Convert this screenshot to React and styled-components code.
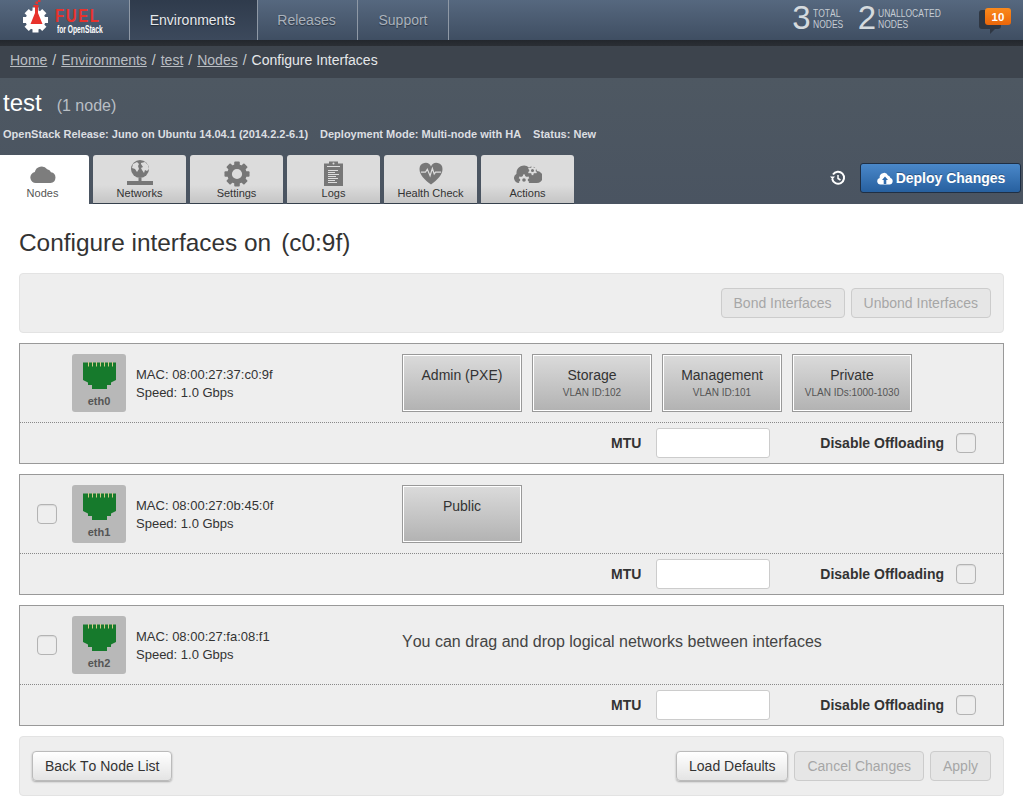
import React from "react";
import styled, { createGlobalStyle, css } from "styled-components";

const Global = createGlobalStyle`
  html, body { margin: 0; padding: 0; background: #fff; }
  body { font-family: "Liberation Sans", Arial, sans-serif; font-size: 14px; color: #333; font-kerning: none; }
  * { box-sizing: border-box; }
`;

const Page = styled.div`width: 1023px; height: 804px; overflow: hidden; background: #fff;`;

const NavBar = styled.header`
  height: 46px; display: flex;
  background: linear-gradient(#56687f 0, #3f4e62 40px, #23272d 40px, #2b2f35 46px);
  color: #fff;
`;
const LogoCell = styled.div`
  width: 130px; height: 40px; border-right: 1px solid #8f99a6;
  display: flex; align-items: center; padding-left: 22px; gap: 3px; flex: none;
`;
const LogoText = styled.div`display: flex; flex-direction: column; line-height: 1; margin-top: 3px;`;
const Fuel = styled.span`
  font-size: 18px; font-weight: 700; color: #e8322c; letter-spacing: 2px; line-height: 15px;
  transform: scaleX(.83); transform-origin: left center; display: block;
`;
const ForOpenStack = styled.span`
  font-size: 10px; font-weight: 700; color: #fff; line-height: 11px; margin-left: 2px; white-space: nowrap;
  transform: scaleX(.67); transform-origin: left center; display: block; width: 45px;
`;
const NavItem = styled.div`
  height: 40px; width: ${p => p.$w}px; flex: none; border-right: 1px solid #8f99a6;
  display: flex; align-items: center; justify-content: center; font-size: 14px;
  padding-right: ${p => p.$pr || 0}px;
  color: ${p => (p.$active ? "#e6e9ec" : "#aab2bc")};
  background: ${p => (p.$active ? "linear-gradient(#2f3b4c, #3c495c)" : "transparent")};
  text-shadow: 0 1px 1px rgba(0,0,0,.4);
`;
const NavRight = styled.div`margin-left: auto; height: 40px; display: flex; align-items: flex-start; padding-top: 1px;`;
const Stat = styled.div`display: flex; align-items: center; margin-right: ${p => p.$mr}px; height: 34px;`;
const StatNum = styled.span`font-size: 33px; font-weight: 400; color: #d5dade; line-height: 34px;`;
const StatLabel = styled.span`
  font-size: 10px; line-height: 11px; color: #c6ccd3; margin-left: 2px; margin-top: 1px; width: ${p => p.$w}px; white-space: nowrap;
  transform: scaleX(.85); transform-origin: left center; display: block;
`;
const Notif = styled.div`position: relative; width: 34px; height: 26px; margin: 7px 12px 0 0;`;
const Bubble = styled.div`
  position: absolute; left: 2px; top: 2px; width: 22px; height: 19px; border-radius: 3px; background: #2f3743;
  &::after { content: ""; position: absolute; left: 11px; bottom: -5px; border: 3px solid transparent; border-top: 3px solid #2f3743; border-left: 3px solid #2f3743; }
`;
const Badge = styled.div`
  position: absolute; left: 8px; top: 0; width: 26px; height: 17px; border-radius: 3px;
  background: linear-gradient(#fb8a1c, #ea660a); color: #fff; font-size: 11.5px; font-weight: 700;
  display: flex; align-items: center; justify-content: center;
`;

const Crumbs = styled.nav`
  height: 32px; background: #3d444d; padding: 5px 10px 0; font-size: 14px; color: #c9cdd1; line-height: 18px;
  display: flex; gap: 5px; white-space: nowrap;
`;
const Crumb = styled.span`text-decoration: underline; color: #b9bdc2;`;
const CrumbCurrent = styled.span`color: #e6e8ea;`;

const Header = styled.section`
  height: 126px; background: linear-gradient(#4e5862, #4a5461); position: relative; display: flex; flex-direction: column;
`;
const ClusterName = styled.div`padding: 11px 0 0 3px; display: flex; align-items: baseline; color: #fff; height: 44px;`;
const ClusterTitle = styled.span`font-size: 24px; line-height: 28px;`;
const ClusterCount = styled.span`font-size: 16px; margin-left: 15px; color: #b9bfc5;`;
const ClusterInfo = styled.div`
  font-size: 11px; font-weight: 700; color: #dcdfe2; padding-left: 3px; margin-top: 5px; line-height: 14px;
  display: flex; gap: 12px;
`;
const TabRow = styled.div`display: flex; gap: 4px; margin: auto 0 0 -4px; align-items: flex-end;`;
const Tab = styled.div`
  width: 93px; height: 49px; border-radius: 3px 3px 0 0; flex: none;
  display: flex; flex-direction: column; align-items: center; justify-content: flex-start; padding-top: 5px;
  font-size: 11px; color: #333;
  ${p => p.$active
    ? css`background: #fff; color: #555;`
    : css`background: linear-gradient(#dcdcdc 0, #dcdcdc 30px, #c4c4c4 49px); border-bottom: 1px solid #35404c; `}
`;
const TabIcon = styled.div`height: 27px; display: flex; align-items: center; justify-content: center;`;
const TabLabel = styled.span`line-height: 13px;`;
const HeaderActions = styled.div`
  position: absolute; right: 2px; top: 85px; display: flex; align-items: center; gap: 14px;
`;
const Deploy = styled.div`
  width: 161px; height: 30px; border-radius: 3px; border: 1px solid #1f2f44;
  background: linear-gradient(#4a88c9, #27609f); color: #fff; font-weight: 700; font-size: 14px;
  display: flex; align-items: center; justify-content: center; gap: 3px; padding-left: 1px; text-shadow: 0 -1px 0 rgba(0,0,0,.3);
`;

const Content = styled.main`padding: 0 19px;`;
const Title = styled.h3`margin: 0; font-weight: 400; font-size: 24.4px; line-height: 28px; color: #333; padding-top: 25px; height: 69px;`;
const TitleNode = styled.span`margin-left: 10px;`;
const Well = styled.div`
  height: 60px; background: #eee; border: 1px solid #e3e3e3; border-radius: 4px;
  display: flex; align-items: center; padding: 0 12px; gap: 6px;
  justify-content: ${p => (p.$between ? "space-between" : "flex-end")};
  margin-bottom: 10px;
`;
const BtnGroup = styled.div`display: flex; gap: 6px;`;
const Btn = styled.div`
  height: 30px; padding: 0 12px; border-radius: 4px; font-size: 14px; display: flex; align-items: center;
  border: 1px solid #bbb;
  ${p => p.$disabled
    ? css`background: #e6e6e6; color: #a6a6a6; border-color: #ccc;`
    : css`background: linear-gradient(#fff, #e4e4e4); color: #333; box-shadow: 0 1px 2px rgba(0,0,0,.3); border-color: #bbb;`}
`;

const Iface = styled.div`border: 1px solid #999; background: #eee; height: 121px; margin-bottom: 10px;`;
const IfaceTop = styled.div`height: 79px; border-bottom: 1px dotted #888; display: flex; padding-left: 17px;`;
const Check = styled.div`
  width: 20px; height: 20px; border: 1px solid #b3b3b3; border-radius: 4px; background: #eee; flex: none;
  box-shadow: inset 0 1px 1px rgba(0,0,0,.08);
`;
const CheckSlot = styled.div`width: 35px; flex: none; padding-top: 29px;`;
const Port = styled.div`
  width: 54px; height: 58px; background: #b8b8b8; border-radius: 3px; margin-top: 10px; flex: none;
  display: flex; flex-direction: column; align-items: center; padding-top: 8px;
`;
const PortName = styled.span`font-size: 11px; font-weight: 700; color: #555; line-height: 13px; margin-top: 6px;`;
const Mac = styled.div`width: 276px; flex: none; padding: 22px 0 0 10px; font-size: 13px; line-height: 18px; color: #333;`;
const NetList = styled.div`display: flex; gap: 10px; padding-top: 10px;`;
const Net = styled.div`
  width: 120px; height: 58px; border: 1px solid #999; box-shadow: inset 0 0 0 1px #fff;
  background: linear-gradient(#dbdbdb, #b2b2b2); text-align: center; color: #333; padding-top: 11px;
  font-size: 14px; line-height: 19px;
`;
const Vlan = styled.div`font-size: 10px; line-height: 12px; color: #555; margin-top: 2px;`;
const Hint = styled.div`font-size: 16px; color: #444; padding-top: 26px; line-height: 20px;`;
const IfaceBottom = styled.div`height: 40px; display: flex; align-items: center; justify-content: flex-end; padding-right: 27px;`;
const FieldLabel = styled.span`font-weight: 700; font-size: 14px; color: #333;`;
const MtuInput = styled.div`
  width: 114px; height: 30px; background: #fff; border: 1px solid #ccc; border-radius: 3px; margin: 0 50px 0 15px;
`;
const OffloadCheck = styled(Check)`margin-left: 12px;`;

const Cloud = ({ c = "#7d7d7d", w = 26, h = 20 }) => (
  <svg width={w} height={h} viewBox="0 0 26 20"><path fill={c} d="M6 19a5.500 5.500 0 0 1-1.200-10.900A7 7 0 0 1 17.200 5.200 5 5 0 0 1 21 8.300 5.400 5.400 0 0 1 20.500 19z"/></svg>
);
const Globe = () => (
  <svg width="26" height="27" viewBox="0 0 26 27">
    <circle cx="13" cy="9" r="9" fill="#777"/>
    <path fill="#ddd" d="M6 4l4-2 2 2-1 2 1 3-2 3-2-3-3-1zM14 3l4-1 3 3 1 4-2 2-2-1-1 3-2-3-1-2 2-1-2-3z"/>
    <path fill="#777" d="M11.500 18h3v4h-3zM0 21h26v4H0z"/>
  </svg>
);
const Gear = ({ size = 28, c = "#777" }) => (
  <svg width={size} height={size} viewBox="0 0 28 28">
    <g fill={c}>{[0,45,90,135,180,225,270,315].map(a => <rect key={a} x="11" y="0.500" width="6" height="7" rx="1" transform={`rotate(${a} 14 14)`}/>)}</g>
    <circle cx="14" cy="14" r="8" fill="none" stroke={c} strokeWidth="5"/>
  </svg>
);
const Clipboard = () => (
  <svg width="19" height="25" viewBox="0 0 19 25">
    <path fill="#777" d="M0 2.500h5V0.500h9v2h5V25H0z"/>
    <path stroke="#ddd" strokeWidth="1" fill="none" d="M3 5.500h13M4 9.500h10M4 11.500h7M4 13.500h11M4 15.500h8M4 17.500h10M4 19.500h7M4 21.500h9"/>
    <circle cx="9.500" cy="2.500" r="1" fill="#ddd"/>
  </svg>
);
const Heart = () => (
  <svg width="24" height="23" viewBox="0 0 26 25">
    <path fill="#777" d="M13 24.500C6 19 0.500 14 0.500 7.500A6.500 6.500 0 0 1 13 5 6.500 6.500 0 0 1 25.500 7.500C25.500 14 20 19 13 24.500z"/>
    <path fill="none" stroke="#ddd" strokeWidth="1.300" d="M2 11h5l2-3 3 7 2.500-8 2 6 1.500-2h6"/>
  </svg>
);
const SmallGear = ({ x, y, r }) => (
  <g transform={`translate(${x} ${y})`}>
    {[0,60,120,180,240,300].map(a => <rect key={a} x={-r * .28} y={-r * 1.45} width={r * .56} height={r * .7} fill="#ddd" transform={`rotate(${a})`}/>)}
    <circle r={r * .75} fill="none" stroke="#ddd" strokeWidth={r * .55}/>
  </g>
);
const ActionsIcon = () => (
  <svg width="28" height="20" viewBox="0 0 28 20">
    <path fill="#777" d="M5 19a5 5 0 0 1-2.500-9.300A7.500 7.500 0 0 1 15 3.500a5 5 0 0 1 8 3.500 6 6 0 0 1-.5 12z"/>
    <SmallGear x={18.500} y={6.500} r={3.200}/>
    <SmallGear x={10} y={16} r={3.800}/>
  </svg>
);
const Rj45 = () => (
  <svg width="33" height="27" viewBox="0 0 33 27">
    <path fill="#167a2c" d="M0 0.500h33V18L28 20.500V23h-4v4H9v-4H5v-2.500L0 18z"/>
    <path stroke="#d3c98a" strokeWidth="1" d="M5.500 0v4.500M9.500 0v4.500M13.500 0v4.500M17.500 0v4.500M21.500 0v4.500M25.500 0v4.500M29.500 0v4.500"/>
  </svg>
);
const Logo = () => (
  <svg width="30" height="40" viewBox="0 0 30 40">
    <g fill="#fff">{[0,45,90,135,180,225,270,315].map(a => <rect key={a} x="10.500" y="7.500" width="6" height="5" transform={`rotate(${a} 13.500 20)`}/>)}</g>
    <circle cx="13.500" cy="20" r="10" fill="#fff"/>
    <path fill="#e8322c" d="M11.500 5h5v2h-.5v6l4.500 11h-12l4.500-11V7h-1.500z"/>
    <path fill="#e8322c" d="M13.500 1.500h2.500v2.500h-2.500zM16 0h2.500v2h-2.500z"/>
  </svg>
);
const HistoryIcon = () => (
  <svg width="16" height="16" viewBox="0 0 16 16" fill="none" stroke="#fff" strokeWidth="2">
    <path d="M3 4.500A6 6 0 1 1 2.200 9"/><path d="M8 5v3.500l2.500 1.500" strokeWidth="1.500"/>
    <path fill="#fff" stroke="none" d="M0 6.500h5L2.500 9.500z" />
  </svg>
);
const DeployCloud = () => (
  <svg width="16" height="13" viewBox="0 0 16 13">
    <path fill="#fff" d="M3.500 12.500a3.300 3.300 0 0 1-.8-6.500A4.400 4.400 0 0 1 11 3.400a3 3 0 0 1 2.300 2.300 3.500 3.500 0 0 1-.8 6.800z"/>
    <path fill="#2f6cae" d="M8 4.500l3 3.500H9.300v4H6.700V8H5z"/>
  </svg>
);

const tabs = [
  ["Nodes", <Cloud key="a" />],
  ["Networks", <Globe key="b" />],
  ["Settings", <Gear key="c" size={26} />],
  ["Logs", <Clipboard key="d" />],
  ["Health Check", <Heart key="e" />],
  ["Actions", <ActionsIcon key="f" />],
];

const ifaces = [
  { name: "eth0", mac: "08:00:27:37:c0:9f", nets: [["Admin (PXE)"], ["Storage", "VLAN ID:102"], ["Management", "VLAN ID:101"], ["Private", "VLAN IDs:1000-1030"]], noCheck: true },
  { name: "eth1", mac: "08:00:27:0b:45:0f", nets: [["Public"]] },
  { name: "eth2", mac: "08:00:27:fa:08:f1", nets: [], hint: "You can drag and drop logical networks between interfaces" },
];

export default function App() {
  return (
    <Page>
      <Global />
      <NavBar>
        <LogoCell>
          <Logo />
          <LogoText><Fuel>FUEL</Fuel><ForOpenStack>for OpenStack</ForOpenStack></LogoText>
        </LogoCell>
        <NavItem $w={128} $pr={2} $active>Environments</NavItem>
        <NavItem $w={100} $pr={2}>Releases</NavItem>
        <NavItem $w={91}>Support</NavItem>
        <NavRight>
          <Stat $mr={15}><StatNum>3</StatNum><StatLabel $w={30}>TOTAL<br />NODES</StatLabel></Stat>
          <Stat $mr={35}><StatNum>2</StatNum><StatLabel $w={64}>UNALLOCATED<br />NODES</StatLabel></Stat>
          <Notif><Bubble /><Badge>10</Badge></Notif>
        </NavRight>
      </NavBar>
      <Crumbs>
        <Crumb>Home</Crumb>/<Crumb>Environments</Crumb>/<Crumb>test</Crumb>/<Crumb>Nodes</Crumb>/<CrumbCurrent>Configure Interfaces</CrumbCurrent>
      </Crumbs>
      <Header>
        <ClusterName><ClusterTitle>test</ClusterTitle><ClusterCount>(1 node)</ClusterCount></ClusterName>
        <ClusterInfo>
          <span>OpenStack Release: Juno on Ubuntu 14.04.1 (2014.2.2-6.1)</span>
          <span>Deployment Mode: Multi-node with HA</span>
          <span>Status: New</span>
        </ClusterInfo>
        <TabRow>
          {tabs.map(([label, icon], i) => (
            <Tab key={label} $active={i === 0}>
              <TabIcon>{icon}</TabIcon>
              <TabLabel>{label}</TabLabel>
            </Tab>
          ))}
        </TabRow>
        <HeaderActions>
          <HistoryIcon />
          <Deploy><DeployCloud />Deploy Changes</Deploy>
        </HeaderActions>
      </Header>
      <Content>
        <Title>Configure interfaces on<TitleNode>(c0:9f)</TitleNode></Title>
        <Well>
          <Btn $disabled>Bond Interfaces</Btn>
          <Btn $disabled>Unbond Interfaces</Btn>
        </Well>
        {ifaces.map(f => (
          <Iface key={f.name}>
            <IfaceTop>
              <CheckSlot>{!f.noCheck && <Check />}</CheckSlot>
              <Port><Rj45 /><PortName>{f.name}</PortName></Port>
              <Mac>MAC: {f.mac}<br />Speed: 1.0 Gbps</Mac>
              {f.hint
                ? <Hint>{f.hint}</Hint>
                : <NetList>{f.nets.map(([n, v]) => (
                    <Net key={n}>{n}{v && <Vlan>{v}</Vlan>}</Net>
                  ))}</NetList>}
            </IfaceTop>
            <IfaceBottom>
              <FieldLabel>MTU</FieldLabel>
              <MtuInput />
              <FieldLabel>Disable Offloading</FieldLabel>
              <OffloadCheck />
            </IfaceBottom>
          </Iface>
        ))}
        <Well $between>
          <Btn>Back To Node List</Btn>
          <BtnGroup>
            <Btn>Load Defaults</Btn>
            <Btn $disabled>Cancel Changes</Btn>
            <Btn $disabled>Apply</Btn>
          </BtnGroup>
        </Well>
      </Content>
    </Page>
  );
}
